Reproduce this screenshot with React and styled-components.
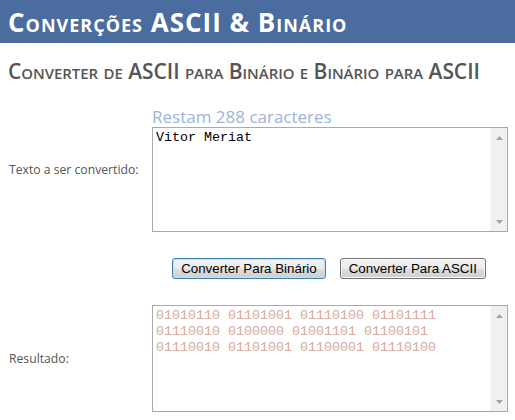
import React from "react";
import styled, { createGlobalStyle } from "styled-components";

const GlobalStyle = createGlobalStyle`
  html, body { margin: 0; padding: 0; background: #fff; }
  body { font-family: "Open Sans", "Noto Sans", sans-serif; color: #696969; }
`;

const Header = styled.header`
  height: 43px;
  background: #4b6c9e;
  display: flex;
  align-items: center;
  padding: 0 8px;
`;

const Title = styled.h1`
  margin: 0;
  font-size: 26px;
  font-weight: 700;
  font-variant: small-caps;
  color: #fff;
  letter-spacing: 1px;
`;

const Main = styled.main`
  padding: 0 8px;
`;

const Subtitle = styled.h2`
  margin: 15px 0 23px;
  font-size: 21px;
  font-weight: 600;
  font-variant: small-caps;
  color: #555;
  line-height: 26px;
  letter-spacing: -0.05px;
`;

const Form = styled.div`
  display: grid;
  grid-template-columns: 144px 356px;
  row-gap: 26px;
`;

const Label = styled.span`
  align-self: center;
  font-size: 12.2px;
  color: #555;
  padding-left: 1px;
`;

const FieldColumn = styled.div`
  display: flex;
  flex-direction: column;
`;

const Counter = styled.div`
  font-size: 17px;
  line-height: 20px;
  color: #9bb5d8;
`;

const TextBox = styled.div`
  display: flex;
  height: ${(p) => p.$height}px;
  border: 1px solid #a9a9a9;
  box-sizing: border-box;
  background: #fff;
`;

const TextArea = styled.textarea`
  flex: 1;
  border: none;
  outline: none;
  resize: none;
  margin: 0;
  padding: 2px 3px;
  font-family: "Liberation Mono", "Courier New", monospace;
  font-size: 13.333px;
  line-height: 16px;
  color: ${(p) => p.$color};
  background: transparent;
  overflow: hidden;
`;

const ScrollTrack = styled.div`
  width: 16px;
  background: #f0f0f0;
  border-left: 1px solid #f7f7f7;
  display: flex;
  flex-direction: column;
  justify-content: space-between;
  align-items: center;
  padding: 8px 0 7px;
`;

const Arrow = ({ down }) => (
  <svg width="7" height="4" viewBox="0 0 7 4">
    <polygon points={down ? "0,0 7,0 3.5,4" : "3.5,0 7,4 0,4"} fill="#a3a3a3" />
  </svg>
);

const ButtonBar = styled.div`
  grid-column: 2;
  display: flex;
  justify-content: center;
  gap: 14px;
  padding-right: 2px;
`;

const Button = styled.button`
  height: 21px;
  padding: 0 8px;
  font-family: "Liberation Sans", Arial, sans-serif;
  font-size: 13.333px;
  color: #000;
  border-radius: 3px;
  border: 1px solid ${(p) => (p.$focused ? "#3c7fb1" : "#707070")};
  background: linear-gradient(#f2f2f2 0%, #ebebeb 50%, #dddddd 51%, #cfcfcf 100%);
  box-shadow: inset 0 0 0 1px ${(p) => (p.$focused ? "#bfe0f5" : "#fcfcfc")};
`;

const binary =
  "01010110 01101001 01110100 01101111 01110010 0100000 01001101 01100101 01110010 01101001 01100001 01110100";

export default function App() {
  return (
    <>
      <GlobalStyle />
      <Header>
        <Title>Converções ASCII &amp; Binário</Title>
      </Header>
      <Main>
        <Subtitle>Converter de ASCII para Binário e Binário para ASCII</Subtitle>
        <Form>
          <Label>Texto a ser convertido:</Label>
          <FieldColumn>
            <Counter>Restam 288 caracteres</Counter>
            <TextBox $height={105}>
              <TextArea $color="#000" defaultValue="Vitor Meriat" />
              <ScrollTrack>
                <Arrow />
                <Arrow down />
              </ScrollTrack>
            </TextBox>
          </FieldColumn>
          <ButtonBar>
            <Button $focused>Converter Para Binário</Button>
            <Button>Converter Para ASCII</Button>
          </ButtonBar>
          <Label>Resultado:</Label>
          <TextBox $height={107}>
            <TextArea $color="#d6a99c" defaultValue={binary} />
            <ScrollTrack>
              <Arrow />
              <Arrow down />
            </ScrollTrack>
          </TextBox>
        </Form>
      </Main>
    </>
  );
}
